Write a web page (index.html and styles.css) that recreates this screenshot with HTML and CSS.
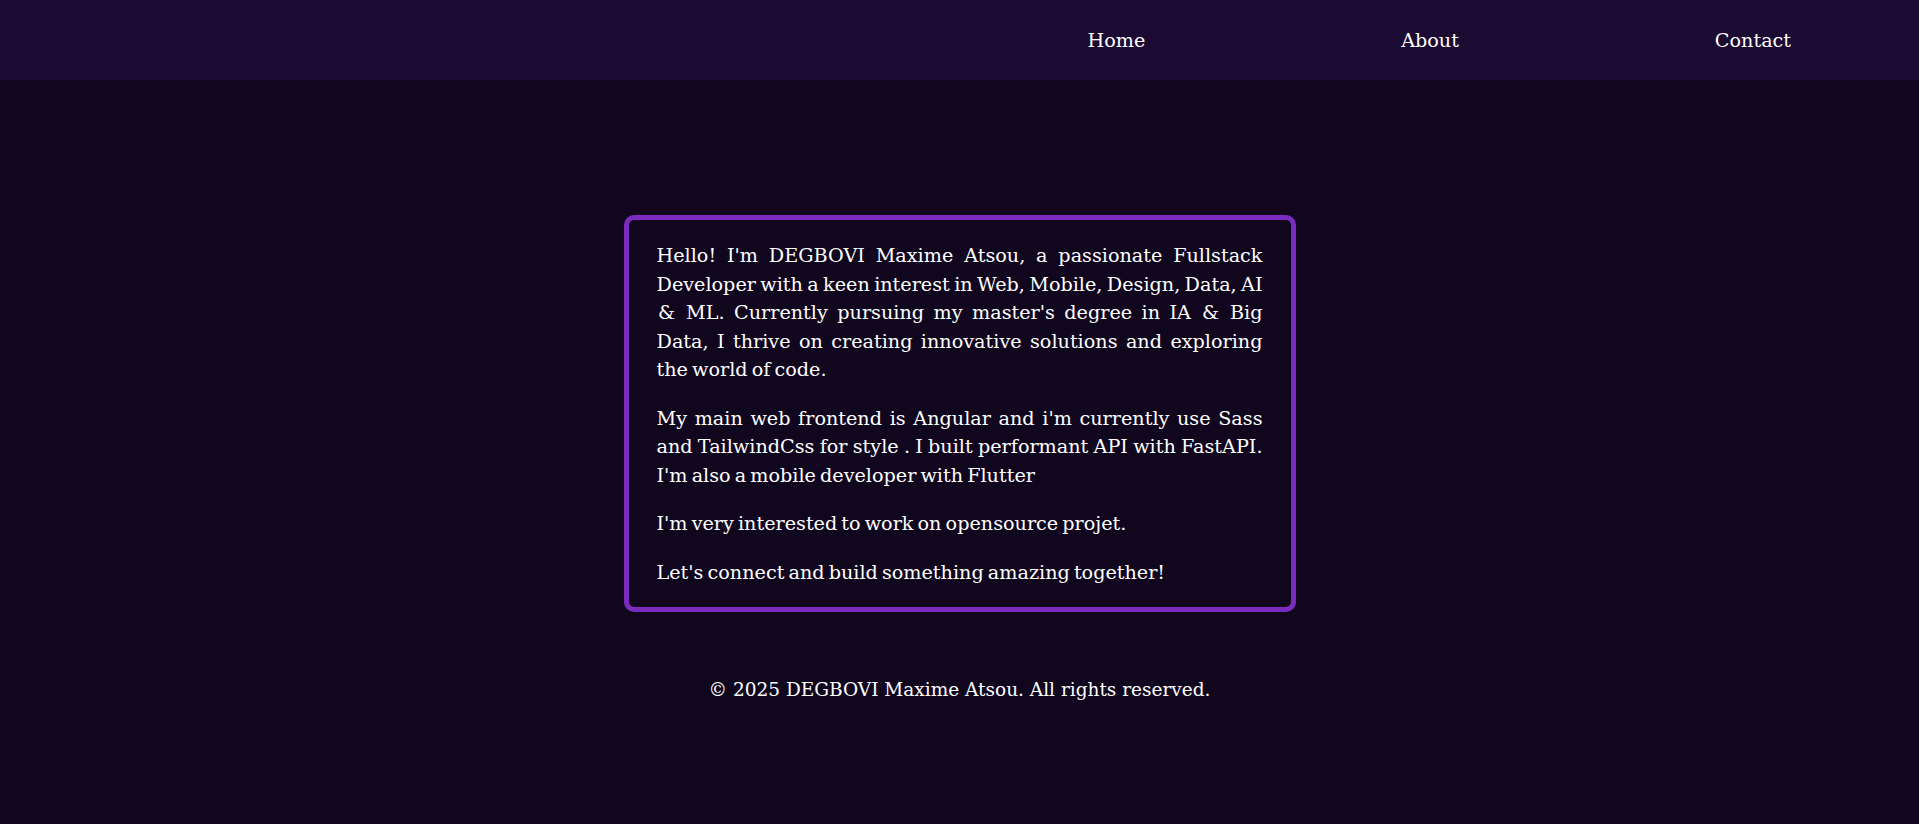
FILE: index.html
```html
<!DOCTYPE html>
<html lang="en">
<head>
<meta charset="utf-8">
<title>DEGBOVI Maxime Atsou</title>
<link rel="stylesheet" href="styles.css">
</head>
<body>
<header class="topbar">
  <div class="brand-space"></div>
  <ul class="nav-links">
    <li><a href="#home">Home</a></li>
    <li><a href="#about">About</a></li>
    <li><a href="#contact">Contact</a></li>
  </ul>
</header>
<main class="content">
  <section class="about-card">
    <p>Hello! I'm DEGBOVI Maxime Atsou, a passionate Fullstack Developer with a keen interest in Web, Mobile, Design, Data, AI <span class="amp">&amp;</span> ML. Currently pursuing my master's degree in IA <span class="amp">&amp;</span> Big Data, I thrive on creating innovative solutions and exploring the world of code.</p>
    <p>My main web frontend is Angular and i'm currently use Sass and TailwindCss for style . I built performant API with FastAPI. I'm also a mobile developer with Flutter</p>
    <p>I'm very interested to work on opensource projet.</p>
    <p>Let's connect and build something amazing together!</p>
  </section>
</main>
<footer class="site-footer">
  <p>&copy; 2025 DEGBOVI Maxime Atsou. All rights reserved.</p>
</footer>
</body>
</html>
```
FILE: styles.css
```css
html, body {
  margin: 0;
  padding: 0;
  background: #10071f;
  color: #ffffff;
  font-family: "DejaVu Serif", "Liberation Serif", serif;
  font-size: 18.5px;
}

.topbar {
  height: 80px;
  background: #1b0a31;
  display: grid;
  grid-template-columns: 1fr 1fr;
  align-items: center;
}

.nav-links {
  list-style: none;
  margin: 0;
  padding: 0;
  display: flex;
  justify-content: space-around;
  font-size: 19.2px;
}

.nav-links a {
  color: #ffffff;
  text-decoration: none;
}

.content {
  display: flex;
  justify-content: center;
  padding-top: 135px;
}

.about-card {
  box-sizing: border-box;
  width: 672px;
  border: 5px solid #7b2cbf;
  border-radius: 10px;
  padding: 22px 28px 20px 28px;
  font-size: 19.2px;
  word-spacing: -2px;
}

.about-card p {
  margin: 0 0 20px;
  line-height: 28.5px;
  text-align: justify;
}

.about-card p:last-child {
  margin-bottom: 0;
}

.amp {
  margin: 0 1.5px;
}

.site-footer {
  text-align: center;
  padding-top: 64px;
}

.site-footer p {
  margin: 0;
  line-height: 28px;
}
```
